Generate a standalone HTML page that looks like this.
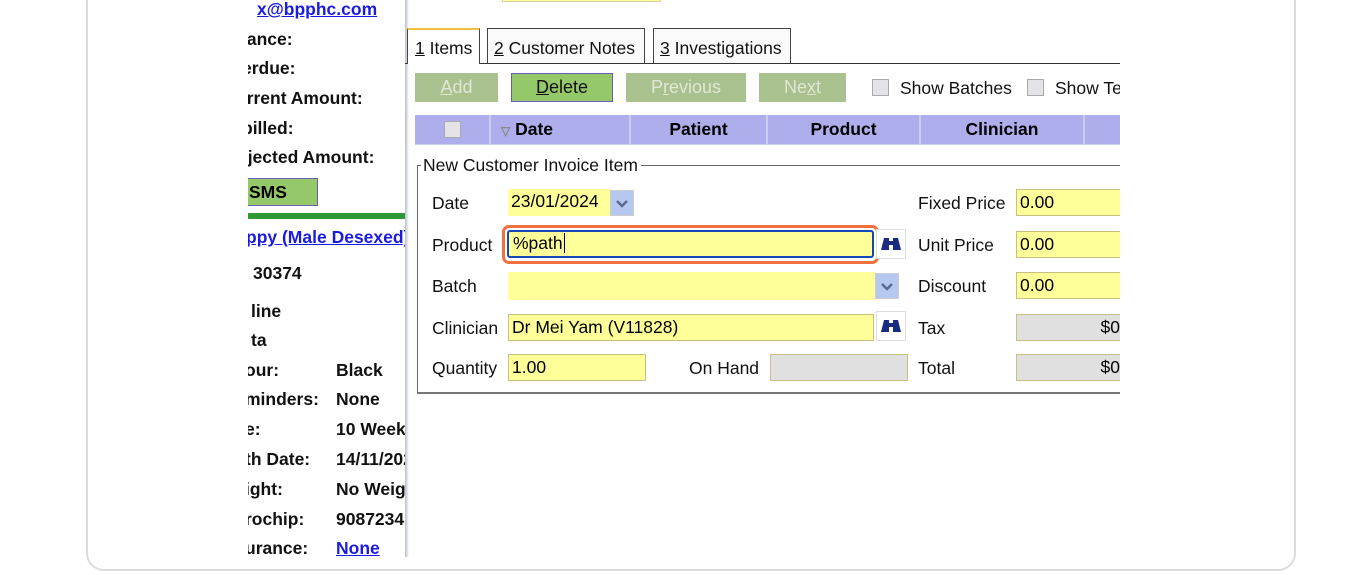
<!DOCTYPE html>
<html><head><style>
body{margin:0;width:1350px;height:575px;background:#fff;position:relative;overflow:hidden;font-family:"Liberation Sans",sans-serif;}
.a{position:absolute;white-space:nowrap;}
.card{position:absolute;left:86px;top:-20px;width:1206px;height:587px;border:2px solid #dcdcdc;border-radius:18px;}
.clipL{position:absolute;left:248px;top:0;width:157px;height:557px;overflow:hidden;}
.lb{position:absolute;font-weight:bold;font-size:17.5px;color:#111;white-space:nowrap;}
.dlg{position:absolute;left:405px;top:0;width:715px;height:557px;overflow:hidden;background:#fff;}
.f{font-size:17.5px;color:#111;}
.yin{position:absolute;background:#ffff99;border:1px solid #c8c080;box-sizing:border-box;font-size:17.5px;padding:2px 3px;line-height:21px;}
.gin{position:absolute;background:#e0e0e0;border:1px solid #c8c080;box-sizing:border-box;font-size:17.5px;padding:2px 3px;line-height:21px;text-align:right;}
.btn{position:absolute;top:73px;height:29px;box-sizing:border-box;font-size:18px;text-align:center;line-height:29px;}
.dis{background:#a9c08f;color:#dfe8d4;}
.th{position:absolute;top:115px;height:29px;background:#aeaeec;border-right:2px solid #c9cdf0;box-sizing:border-box;font-weight:bold;font-size:17.5px;text-align:center;line-height:29px;}
.cb{position:absolute;width:17px;height:17px;background:#e4e4e8;border:1px solid #aaa;box-sizing:border-box;}
.bino{position:absolute;width:30px;height:30px;border:1px solid #ddd;box-sizing:border-box;background:#fff;}
.dd{position:absolute;width:22px;height:24px;background:#b6c8f0;border:1px solid #ccc;}
</style></head><body>
<div class="card"></div>
<div class="clipL">
<div class="lb" style="left:9px;top:-1px;color:#1a1ae0;text-decoration:underline;">x@bpphc.com</div>
<div class="lb" style="left:-6px;top:29px">lance:</div>
<div class="lb" style="left:-6px;top:58px">erdue:</div>
<div class="lb" style="left:-12px;top:88px">urrent Amount:</div>
<div class="lb" style="left:-6px;top:118px">billed:</div>
<div class="lb" style="left:-11px;top:147px">ojected Amount:</div>
<div style="position:absolute;left:-10px;top:178px;width:80px;height:28px;background:#95c868;border:1px solid #6a5ac0;box-sizing:border-box;font-weight:bold;font-size:17.5px;line-height:26px;padding-left:10px;">SMS</div>
<div style="position:absolute;left:0;top:213px;width:160px;height:6px;background:#2f9a35"></div>
<div class="lb" style="left:-2px;top:227px;color:#1a1ae0;text-decoration:underline;">ppy (Male Desexed)</div>
<div class="lb" style="left:5px;top:263px">30374</div>
<div class="lb" style="left:3px;top:301px">line</div>
<div class="lb" style="left:3px;top:330px">ta</div>
<div class="lb" style="left:-3px;top:360px">our:</div>
<div class="lb" style="left:-3px;top:389px">minders:</div>
<div class="lb" style="left:-3px;top:419px">e:</div>
<div class="lb" style="left:-3px;top:449px">th Date:</div>
<div class="lb" style="left:-3px;top:479px">ight:</div>
<div class="lb" style="left:-3px;top:509px">rochip:</div>
<div class="lb" style="left:-3px;top:538px">urance:</div>
<div class="lb" style="left:88px;top:360px">Black</div>
<div class="lb" style="left:88px;top:389px">None</div>
<div class="lb" style="left:88px;top:419px">10 Weeks</div>
<div class="lb" style="left:88px;top:449px">14/11/2023</div>
<div class="lb" style="left:88px;top:479px">No Weight</div>
<div class="lb" style="left:88px;top:509px">90872345</div>
<div class="lb" style="left:88px;top:538px;color:#1a1ae0;text-decoration:underline;">None</div>
</div>
<div class="dlg">
<div style="position:absolute;left:0;top:0;width:4px;height:557px;background:linear-gradient(90deg,#b8bccc,#fff)"></div>
<div style="position:absolute;left:97px;top:-4px;width:157px;height:4px;background:#ffff99;border:1px solid #d8d0a0"></div>
<div style="position:absolute;left:0;top:63px;width:715px;height:1px;background:#333"></div>
<div class="a f" style="left:2px;top:28px;width:73px;height:36px;background:#fff;border:1px solid #444;border-bottom:none;border-top:2px solid #f0c040;box-sizing:border-box;padding:8px 0 0 7px;"><u>1</u> Items</div>
<div class="a f" style="left:82px;top:28px;width:158px;height:35px;background:#fafafa;border:1px solid #444;border-bottom:none;box-sizing:border-box;padding:9px 0 0 6px;"><u>2</u> Customer Notes</div>
<div class="a f" style="left:248px;top:28px;width:138px;height:35px;background:#fafafa;border:1px solid #444;border-bottom:none;box-sizing:border-box;padding:9px 0 0 6px;"><u>3</u> Investigations</div>
<div class="btn dis" style="left:10px;width:83px"><u>A</u>dd</div>
<div class="btn" style="left:106px;width:102px;background:#95c868;border:1px solid #6a5ac0;color:#111;line-height:27px"><u>D</u>elete</div>
<div class="btn dis" style="left:221px;width:120px">P<u>r</u>evious</div>
<div class="btn dis" style="left:354px;width:87px">Ne<u>x</u>t</div>
<div class="cb" style="left:467px;top:79px"></div>
<div class="a f" style="left:495px;top:78px">Show Batches</div>
<div class="cb" style="left:622px;top:79px"></div>
<div class="a f" style="left:650px;top:78px">Show Te</div>
<div style="position:absolute;left:10px;top:143px;width:705px;height:2px;background:#c9cdf0"></div>
<div class="th" style="left:10px;width:76px"><div class="cb" style="left:29px;top:6px"></div></div>
<div class="th" style="left:86px;width:140px;text-align:left;padding-left:10px"><span style="color:#888;font-size:12px">▽</span> Date</div>
<div class="th" style="left:226px;width:137px">Patient</div>
<div class="th" style="left:363px;width:153px">Product</div>
<div class="th" style="left:516px;width:164px">Clinician</div>
<div class="th" style="left:680px;width:40px;border:none"></div>
<div style="position:absolute;left:12px;top:165px;width:710px;height:229px;border:1px solid #666;border-right:none;border-bottom:2px solid #777;box-sizing:border-box;"></div>
<div class="a f" style="left:16px;top:155px;background:#fff;padding:0 3px 0 2px">New Customer Invoice Item</div>
<div class="a f" style="left:27px;top:193px">Date</div>
<div class="a f" style="left:27px;top:235px">Product</div>
<div class="a f" style="left:27px;top:276px">Batch</div>
<div class="a f" style="left:27px;top:318px">Clinician</div>
<div class="a f" style="left:27px;top:358px">Quantity</div>
<div class="yin" style="left:103px;top:189px;width:103px;height:27px;border:none">23/01/2024</div>
<div class="dd" style="left:205px;top:190px;"><svg width="22" height="24"><path d="M6 10l5 5 5-5" stroke="#5a6a90" stroke-width="2.5" fill="none"/></svg></div>
<div style="position:absolute;left:97px;top:225px;width:377px;height:39px;border:3px solid #f07040;border-radius:7px;box-sizing:border-box;"></div>
<div class="yin" style="left:102px;top:230px;width:367px;height:28px;border:2px solid #1248b8;border-radius:3px;padding:1px 4px">%path<span style="border-left:1px solid #000;margin-left:1px"></span></div>
<div class="bino" style="left:471px;top:229px"><svg width="28" height="28"><path d="M7 8h5v3h4V8h5l3 12h-8v-5h-4v5H4z" fill="#1a2a80"/></svg></div>
<div class="yin" style="left:103px;top:272px;width:367px;height:28px;border:none"></div>
<div class="dd" style="left:470px;top:273px;"><svg width="22" height="24"><path d="M6 10l5 5 5-5" stroke="#5a6a90" stroke-width="2.5" fill="none"/></svg></div>
<div class="yin" style="left:103px;top:314px;width:366px;height:27px">Dr Mei Yam (V11828)</div>
<div class="bino" style="left:471px;top:311px"><svg width="28" height="28"><path d="M7 8h5v3h4V8h5l3 12h-8v-5h-4v5H4z" fill="#1a2a80"/></svg></div>
<div class="yin" style="left:103px;top:354px;width:138px;height:27px">1.00</div>
<div class="a f" style="left:284px;top:358px">On Hand</div>
<div class="gin" style="left:365px;top:354px;width:138px;height:27px"></div>
<div class="a f" style="left:513px;top:193px">Fixed Price</div>
<div class="a f" style="left:513px;top:235px">Unit Price</div>
<div class="a f" style="left:513px;top:276px">Discount</div>
<div class="a f" style="left:513px;top:318px">Tax</div>
<div class="a f" style="left:513px;top:358px">Total</div>
<div class="yin" style="left:611px;top:189px;width:120px;height:27px">0.00</div>
<div class="yin" style="left:611px;top:231px;width:120px;height:27px">0.00</div>
<div class="yin" style="left:611px;top:272px;width:120px;height:27px">0.00</div>
<div class="gin" style="left:611px;top:314px;width:120px;height:27px;padding-right:15px">$0</div>
<div class="gin" style="left:611px;top:354px;width:120px;height:27px;padding-right:15px">$0</div>
</div>
</body></html>
